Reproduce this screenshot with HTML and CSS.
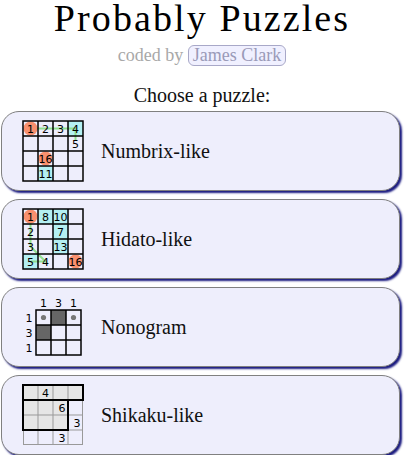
FILE: index.html
```html
<!DOCTYPE html>
<html>
<head>
<meta charset="utf-8">
<link rel="stylesheet" href="styles.css">
</head>
<body>
<header class="head">
  <h1 class="title">Probably Puzzles</h1>
  <div class="byline">coded by <span class="author">James Clark</span></div>
  <p class="choose">Choose a puzzle:</p>
</header>
<main class="list">
  <a class="card">
    <svg class="thumb" width="62" height="62" viewBox="0 0 62 62">
      <rect x="46" y="1" width="15" height="15" fill="#b4f0f2"/>
      <rect x="16" y="46" width="15" height="15" fill="#b4f0f2"/>
      <polyline points="8.5,8.5 53.5,8.5 53.5,20" fill="none" stroke="#90e090" stroke-width="2"/>
      <circle cx="8.5" cy="8.5" r="7" fill="#f8906e"/>
      <circle cx="23.5" cy="38.5" r="7" fill="#f8906e"/>
      <g stroke="#000" stroke-width="1.5" fill="none">
        <rect x="1" y="1" width="60" height="60"/>
        <line x1="16" y1="1" x2="16" y2="61"/><line x1="31" y1="1" x2="31" y2="61"/><line x1="46" y1="1" x2="46" y2="61"/>
        <line x1="1" y1="16" x2="61" y2="16"/><line x1="1" y1="31" x2="61" y2="31"/><line x1="1" y1="46" x2="61" y2="46"/>
      </g>
      <g class="num" text-anchor="middle">
        <text x="8.5" y="12.5">1</text><text x="23.5" y="12.5">2</text><text x="38.5" y="12.5">3</text><text x="53.5" y="12.5">4</text>
        <text x="53.5" y="27.5">5</text><text x="23.5" y="42.5">16</text><text x="23.5" y="57.5">11</text>
      </g>
    </svg>
    <span class="label">Numbrix-like</span>
  </a>
  <a class="card">
    <svg class="thumb" width="62" height="62" viewBox="0 0 62 62">
      <rect x="16" y="1" width="30" height="15" fill="#b4f0f2"/>
      <rect x="31" y="16" width="15" height="30" fill="#b4f0f2"/>
      <rect x="1" y="46" width="15" height="15" fill="#b4f0f2"/>
      <polyline points="8.5,8.5 8.5,38.5 23.5,53.5 8.5,53.5" fill="none" stroke="#90e090" stroke-width="2"/>
      <circle cx="8.5" cy="8.5" r="7" fill="#f8906e"/>
      <circle cx="53.5" cy="53.5" r="7" fill="#f8906e"/>
      <g stroke="#000" stroke-width="1.5" fill="none">
        <rect x="1" y="1" width="60" height="60"/>
        <line x1="16" y1="1" x2="16" y2="61"/><line x1="31" y1="1" x2="31" y2="61"/><line x1="46" y1="1" x2="46" y2="61"/>
        <line x1="1" y1="16" x2="61" y2="16"/><line x1="1" y1="31" x2="61" y2="31"/><line x1="1" y1="46" x2="61" y2="46"/>
      </g>
      <g class="num" text-anchor="middle">
        <text x="8.5" y="12.5">1</text><text x="23.5" y="12.5">8</text><text x="38.5" y="12.5">10</text>
        <text x="8.5" y="27.5">2</text><text x="38.5" y="27.5">7</text>
        <text x="8.5" y="42.5">3</text><text x="38.5" y="42.5">13</text>
        <text x="8.5" y="57.5">5</text><text x="23.5" y="57.5">4</text><text x="53.5" y="57.5">16</text>
      </g>
    </svg>
    <span class="label">Hidato-like</span>
  </a>
  <a class="card">
    <svg class="thumb" width="62" height="62" viewBox="0 0 62 62">
      <rect x="29" y="14" width="15" height="15" fill="#666"/>
      <rect x="14" y="29" width="15" height="15" fill="#666"/>
      <circle cx="21.5" cy="21.5" r="2.6" fill="#777"/>
      <circle cx="51.5" cy="21.5" r="2.6" fill="#777"/>
      <g stroke="#000" stroke-width="1.5" fill="none">
        <rect x="14" y="14" width="45" height="45"/>
        <line x1="29" y1="14" x2="29" y2="59"/><line x1="44" y1="14" x2="44" y2="59"/>
        <line x1="14" y1="29" x2="59" y2="29"/><line x1="14" y1="44" x2="59" y2="44"/>
      </g>
      <g class="num" text-anchor="middle">
        <text x="21.5" y="11">1</text><text x="36.5" y="11">3</text><text x="51.5" y="11">1</text>
        <text x="7" y="25.5">1</text><text x="7" y="40.5">3</text><text x="7" y="55.5">1</text>
      </g>
    </svg>
    <span class="label">Nonogram</span>
  </a>
  <a class="card">
    <svg class="thumb" width="62" height="62" viewBox="0 0 62 62">
      <rect x="1" y="1" width="60" height="15" fill="#e6e6e6"/>
      <rect x="1" y="16" width="45" height="30" fill="#e6e6e6"/>
      <g stroke="#999" stroke-width="1" fill="none">
        <line x1="16" y1="1" x2="16" y2="61"/><line x1="31" y1="1" x2="31" y2="61"/><line x1="46" y1="1" x2="46" y2="61"/><line x1="60.5" y1="16" x2="60.5" y2="61"/>
        <line x1="1" y1="31" x2="61" y2="31"/><line x1="1.5" y1="46" x2="1.5" y2="61"/><line x1="1" y1="60.5" x2="61" y2="60.5"/>
        <line x1="46" y1="46" x2="61" y2="46"/>
      </g>
      <g stroke="#000" stroke-width="2" fill="none">
        <rect x="1" y="1" width="60" height="15"/>
        <rect x="1" y="16" width="45" height="30"/>
      </g>
      <g class="num" text-anchor="middle">
        <text x="23.5" y="12.5">4</text><text x="40" y="27.5">6</text><text x="55" y="42.5">3</text><text x="40" y="57.5">3</text>
      </g>
    </svg>
    <span class="label">Shikaku-like</span>
  </a>
</main>
</body>
</html>
```
FILE: styles.css
```css
html, body {
  margin: 0;
  padding: 0;
  background: #fff;
}
body {
  font-family: "Liberation Serif", "DejaVu Serif", serif;
  color: #111;
}
.head {
  text-align: center;
}
.title {
  font-size: 38px;
  font-weight: normal;
  margin: 0;
  line-height: 36px;
  letter-spacing: 2.1px;
  color: #000;
}
.byline {
  margin-top: 8px;
  font-size: 18px;
  color: #a8a8a8;
  line-height: 22px;
}
.author {
  display: inline-block;
  color: #9a9ab8;
  background: #f0f0ff;
  border: 1px solid #a8a8c8;
  border-radius: 6px;
  padding: 0 4px;
  line-height: 19px;
}
.choose {
  margin: 18px 0 5px;
  font-size: 20px;
  line-height: 22px;
}
.list {
  display: flex;
  flex-direction: column;
  gap: 8px;
  padding: 0 4px 0 1px;
}
.card {
  display: flex;
  align-items: center;
  gap: 17px;
  height: 78px;
  padding: 0 20px;
  background: #eeeefc;
  border: 1px solid #808080;
  border-radius: 18px;
  box-shadow: 2px 2px 2px #1a1a80;
  color: #111;
  text-decoration: none;
}
.thumb {
  flex: none;
  display: block;
}
.num {
  font-family: "DejaVu Sans", sans-serif;
  font-size: 11px;
  fill: #000;
}
.label {
  font-size: 20px;
}
```
